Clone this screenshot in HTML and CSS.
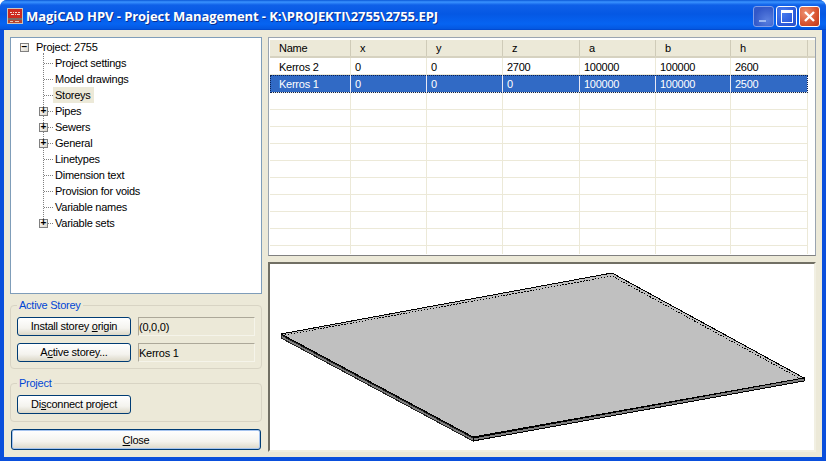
FILE: index.html
```html
<!DOCTYPE html>
<html>
  <head>
    <meta charset="utf-8" />
    <title>MagiCAD HPV - Project Management</title>
    <link rel="stylesheet" href="styles.css">
  </head>
  <body>
    <div class="window">
      <div class="titlebar">
        <svg class="app-icon" width="16" height="16" viewBox="0 0 16 16">
          <rect width="16" height="16" fill="#c9c4bc"/>
          <rect x="1" y="1" width="14" height="9" fill="#cc2a20"/>
          <path d="M3 4h2v1H3zM6 4h1v1H6zM8 4h2v1H8zM11 4h2v1h-2zM4 6h3v1H4zM8 6h1v1H8zM10 6h3v1h-3z" fill="#f6d8d0"/>
          <rect x="1" y="10" width="14" height="2" fill="#7d6a64"/>
          <rect x="1" y="12" width="14" height="3" fill="#b8452f"/>
          <path d="M3 13h3v1H3zM8 13h4v1H8z" fill="#e8c8b8"/>
        </svg>
        <span class="title">MagiCAD HPV - Project Management - K:\PROJEKTI\2755\2755.EPJ</span>
        <div class="win-buttons">
          <div class="win-btn min"><span class="min-bar"></span></div>
          <div class="win-btn max"><span class="max-box"></span></div>
          <div class="win-btn close">
            <svg width="19" height="19" viewBox="0 0 19 19"><path d="M5 5 L14 14 M14 5 L5 14" stroke="#fff" stroke-width="2.4"/></svg>
          </div>
        </div>
      </div>

      <div class="client">
        <div class="left">
          <div class="tree">
            <div class="tree-row root"><span class="exp">&minus;</span><span class="lbl">Project: 2755</span></div>
            <div class="tree-row"><span class="dash"></span><span class="lbl">Project settings</span></div>
            <div class="tree-row"><span class="dash"></span><span class="lbl">Model drawings</span></div>
            <div class="tree-row"><span class="dash"></span><span class="lbl sel">Storeys</span></div>
            <div class="tree-row"><span class="exp">+</span><span class="dash short"></span><span class="lbl">Pipes</span></div>
            <div class="tree-row"><span class="exp">+</span><span class="dash short"></span><span class="lbl">Sewers</span></div>
            <div class="tree-row"><span class="exp">+</span><span class="dash short"></span><span class="lbl">General</span></div>
            <div class="tree-row"><span class="dash"></span><span class="lbl">Linetypes</span></div>
            <div class="tree-row"><span class="dash"></span><span class="lbl">Dimension text</span></div>
            <div class="tree-row"><span class="dash"></span><span class="lbl">Provision for voids</span></div>
            <div class="tree-row"><span class="dash"></span><span class="lbl">Variable names</span></div>
            <div class="tree-row"><span class="exp">+</span><span class="dash short"></span><span class="lbl">Variable sets</span></div>
          </div>

          <fieldset class="group active-storey">
            <legend>Active Storey</legend>
            <div class="group-row">
              <button class="btn">Install storey <u>o</u>rigin</button>
              <div class="readout">(0,0,0)</div>
            </div>
            <div class="group-row">
              <button class="btn">A<u>c</u>tive storey...</button>
              <div class="readout">Kerros 1</div>
            </div>
          </fieldset>

          <fieldset class="group project">
            <legend>Project</legend>
            <div class="group-row">
              <button class="btn">Di<u>s</u>connect project</button>
            </div>
          </fieldset>

          <button class="btn close-btn"><u>C</u>lose</button>
        </div>

        <div class="right">
          <div class="grid-box">
            <div class="grid-row head">
              <div class="cell name">Name</div><div class="cell">x</div><div class="cell">y</div><div class="cell">z</div><div class="cell">a</div><div class="cell">b</div><div class="cell">h</div>
            </div>
            <div class="grid-row">
              <div class="cell name">Kerros 2</div><div class="cell">0</div><div class="cell">0</div><div class="cell">2700</div><div class="cell">100000</div><div class="cell">100000</div><div class="cell">2600</div>
            </div>
            <div class="grid-row selected">
              <div class="cell name">Kerros 1</div><div class="cell">0</div><div class="cell">0</div><div class="cell">0</div><div class="cell">100000</div><div class="cell">100000</div><div class="cell">2500</div>
            </div>
            <div class="grid-row"><div class="cell name"></div><div class="cell"></div><div class="cell"></div><div class="cell"></div><div class="cell"></div><div class="cell"></div><div class="cell"></div></div>
            <div class="grid-row"><div class="cell name"></div><div class="cell"></div><div class="cell"></div><div class="cell"></div><div class="cell"></div><div class="cell"></div><div class="cell"></div></div>
            <div class="grid-row"><div class="cell name"></div><div class="cell"></div><div class="cell"></div><div class="cell"></div><div class="cell"></div><div class="cell"></div><div class="cell"></div></div>
            <div class="grid-row"><div class="cell name"></div><div class="cell"></div><div class="cell"></div><div class="cell"></div><div class="cell"></div><div class="cell"></div><div class="cell"></div></div>
            <div class="grid-row"><div class="cell name"></div><div class="cell"></div><div class="cell"></div><div class="cell"></div><div class="cell"></div><div class="cell"></div><div class="cell"></div></div>
            <div class="grid-row"><div class="cell name"></div><div class="cell"></div><div class="cell"></div><div class="cell"></div><div class="cell"></div><div class="cell"></div><div class="cell"></div></div>
            <div class="grid-row"><div class="cell name"></div><div class="cell"></div><div class="cell"></div><div class="cell"></div><div class="cell"></div><div class="cell"></div><div class="cell"></div></div>
            <div class="grid-row"><div class="cell name"></div><div class="cell"></div><div class="cell"></div><div class="cell"></div><div class="cell"></div><div class="cell"></div><div class="cell"></div></div>
            <div class="grid-row"><div class="cell name"></div><div class="cell"></div><div class="cell"></div><div class="cell"></div><div class="cell"></div><div class="cell"></div><div class="cell"></div></div>
            <div class="grid-row last"><div class="cell name"></div><div class="cell"></div><div class="cell"></div><div class="cell"></div><div class="cell"></div><div class="cell"></div><div class="cell"></div></div>
          </div>

          <div class="preview">
            <svg width="545" height="188" viewBox="270 264 545 188">
              <polygon points="281,335 473,438 473,441 281,338" fill="#808080" stroke="#222" stroke-width="1"/>
              <polygon points="473,438 804,378 804,381 473,441" fill="#808080" stroke="#000" stroke-width="1"/>
              <polygon points="281,334 612,273 804,378 473,437" fill="#c0c0c0" stroke="#000" stroke-width="1"/>
              <polyline points="285,335 612,276 799,378" fill="none" stroke="#000" stroke-width="1" stroke-dasharray="1.5 1.5"/>
            </svg>
          </div>
        </div>
      </div>
    </div>
  </body>
</html>
```

FILE: styles.css
```css
html, body {
  margin: 0;
  padding: 0;
}
body {
  width: 826px;
  height: 461px;
  overflow: hidden;
  font-family: "Liberation Sans", Arial, sans-serif;
  font-size: 11px;
  letter-spacing: -0.25px;
  color: #000;
}
.window {
  width: 826px;
  height: 461px;
  display: flex;
  flex-direction: column;
  background: #0a4fdc;
  border-radius: 7px 7px 0 0;
  box-sizing: border-box;
  padding: 0 4px 4px 4px;
}
.titlebar {
  height: 30px;
  box-sizing: border-box;
  margin: 0 -4px;
  padding: 2px 6px 0 7px;
  display: flex;
  align-items: center;
  border-radius: 7px 7px 0 0;
  background: linear-gradient(to bottom, #0a57d6 0, #3a93ff 2px, #0f60e8 5px, #0558e4 14px, #0664f2 24px, #0457e0 29px, #003fc0 30px);
}
.app-icon {
  flex: none;
}
.title {
  margin-left: 3px;
  font-family: "Open Sans", sans-serif;
  font-weight: 700;
  font-size: 13px;
  letter-spacing: -0.07px;
  color: #fff;
  white-space: nowrap;
  text-shadow: 1px 1px 0 #0a2f90;
}
.win-buttons {
  margin-left: auto;
  display: flex;
  gap: 2px;
}
.win-btn {
  width: 19px;
  height: 19px;
  border: 1px solid #fff;
  border-radius: 3px;
  display: flex;
  align-items: center;
  justify-content: center;
  position: relative;
}
.win-btn.min,
.win-btn.max {
  background: radial-gradient(circle at 30% 30%, #4a7df0, #2a58d8 70%, #3050c0);
}
.win-btn.min {
  border-color: #7f9de8;
  background: radial-gradient(circle at 70% 70%, #5a80e0, #3258c8 70%);
}
.win-btn.close {
  background: radial-gradient(circle at 30% 30%, #ee9070, #d8532f 60%, #c03818);
}
.min-bar {
  position: absolute;
  left: 5px;
  bottom: 4px;
  width: 7px;
  height: 2px;
  background: #9db8f0;
}
.max-box {
  width: 10px;
  height: 9px;
  border: 1px solid #fff;
  border-top-width: 3px;
}
.client {
  flex: 1;
  display: flex;
  gap: 6px;
  padding: 7px 6px 5px 6px;
  background: #ece9d8;
  min-height: 0;
}
.left {
  width: 252px;
  display: flex;
  flex-direction: column;
}
.tree {
  height: 257px;
  box-sizing: border-box;
  padding: 1px 0 0 0;
  background: #fff;
  border: 1px solid #7f9db9;
  position: relative;
  flex: none;
}
.tree::before {
  content: "";
  position: absolute;
  left: 32px;
  top: 15px;
  height: 170px;
  border-left: 1px dotted #808080;
}
.tree-row {
  height: 16px;
  display: flex;
  align-items: center;
  padding-left: 28px;
  position: relative;
  white-space: nowrap;
}
.tree-row.root {
  padding-left: 9px;
}
.exp {
  width: 7px;
  height: 7px;
  border: 1px solid #808080;
  background: linear-gradient(135deg, #fff, #ddd8cc);
  font-size: 10px;
  line-height: 6px;
  letter-spacing: 0;
  font-weight: 700;
  text-align: center;
  flex: none;
  position: relative;
  z-index: 1;
}
.tree-row.root .lbl {
  margin-left: 5px;
}
.dash {
  width: 9px;
  margin-left: 5px;
  border-top: 1px dotted #808080;
  flex: none;
}
.dash.short {
  width: 5px;
  margin-left: 0;
}
.lbl {
  padding: 0 3px 0 2px;
  height: 16px;
  line-height: 16px;
}
.lbl.sel {
  background: #ece9d8;
}
.group {
  margin: 0;
  padding: 1px 5px 0 6px;
  border: 1px solid #d8d4c4;
  border-radius: 4px;
  min-width: 0;
  flex: none;
}
.group legend {
  color: #0046d5;
  padding: 0 2px;
  margin-left: 0;
  line-height: 13px;
}
.active-storey {
  margin-top: 5px;
  height: 67px;
}
.project {
  margin-top: 8px;
  height: 42px;
}
.group-row {
  display: flex;
  align-items: center;
  gap: 7px;
  height: 26px;
}
.btn {
  width: 114px;
  height: 19px;
  padding: 0;
  font: inherit;
  letter-spacing: inherit;
  color: #000;
  background: linear-gradient(to bottom, #fff 0, #f4f3ee 60%, #dcd8c8 100%);
  border: 1px solid #003c74;
  border-radius: 3px;
  white-space: nowrap;
}
.readout {
  width: 117px;
  height: 19px;
  line-height: 18px;
  box-sizing: border-box;
  padding-left: 0;
  border: 1px solid;
  border-color: #aca899 #f5f4ea #f5f4ea #aca899;
  background: #ece9d8;
  white-space: nowrap;
}
.close-btn {
  width: 250px;
  height: 21px;
  margin: 7px 0 0 1px;
  flex: none;
  box-shadow: inset 0 0 0 1px #a6c4ef;
}
.right {
  width: 548px;
  display: flex;
  flex-direction: column;
  gap: 6px;
}
.grid-box {
  height: 219px;
  box-sizing: border-box;
  padding: 2px 7px 0 1px;
  background: #fff;
  border: 1px solid #9aa4b0;
  border-bottom-color: #808080;
  overflow: hidden;
  flex: none;
}
.grid-row {
  display: grid;
  grid-template-columns: 81px 76px 76px 77px 76px 75px 77px;
  height: 17px;
  border-bottom: 1px solid #ece9d8;
  box-sizing: border-box;
}
.grid-row.last {
  border-bottom: none;
  height: 8px;
}
.cell {
  padding-left: 4px;
  line-height: 18px;
  border-right: 1px solid #ece9d8;
  white-space: nowrap;
}
.cell.name {
  padding-left: 9px;
}
.grid-row.head {
  height: 18px;
  background: #ece9d8;
  border-bottom: 2px solid #d6d2c0;
  margin-right: -7px;
  padding-right: 7px;
}
.grid-row.head .cell {
  padding-left: 9px;
  line-height: 16px;
  border-right: 1px solid #cfcbb8;
}
.grid-row.selected {
  height: 18px;
  background: #316ac5;
  color: #fff;
  outline: 1px dotted #0a2050;
  outline-offset: -1px;
}
.grid-row.selected .cell {
  border-right-color: #e8e8f4;
}
.preview {
  flex: 1;
  min-height: 0;
  background: #fff;
  border: 2px solid;
  border-color: #716f64 #f1efe2 #f1efe2 #716f64;
  overflow: hidden;
}
.preview svg {
  display: block;
  shape-rendering: crispEdges;
}
```
